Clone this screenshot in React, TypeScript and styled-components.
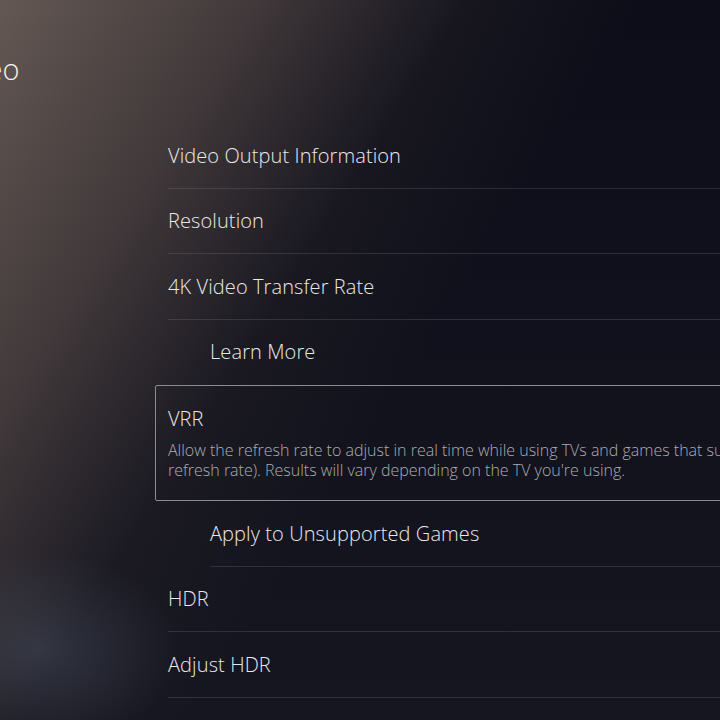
import React from 'react';
import styled, { createGlobalStyle } from 'styled-components';

const GlobalStyle = createGlobalStyle`
  html, body {
    margin: 0;
    padding: 0;
    background: #0d0e18;
  }
`;

const Screen = styled.div`
  width: 720px;
  height: 720px;
  overflow: hidden;
  font-family: 'Open Sans', 'Noto Sans', sans-serif;
  color: #e9e9ea;
  background:
    radial-gradient(ellipse 200px 140px at 40px 650px, rgba(90, 100, 120, 0.35), transparent 70%),
    linear-gradient(122deg, rgba(104, 92, 86, 0.95) 0%, rgba(74, 64, 64, 0.85) 22%, rgba(40, 36, 42, 0.4) 40%, transparent 55%),
    linear-gradient(180deg, #0c0d18 0%, #151620 100%);
  display: flex;
  flex-direction: column;
`;

const PageTitle = styled.h1`
  margin: 49px 0 0 -54px;
  font-size: 29px;
  font-weight: 300;
  line-height: 40px;
  color: #f2f2f2;
`;

const SettingsList = styled.div`
  margin: 34px 0 0 155px;
  width: 780px;
  display: flex;
  flex-direction: column;
`;

const Row = styled.div<{ $indent?: boolean; $noLine?: boolean }>`
  height: 65.5px;
  box-sizing: border-box;
  margin-left: ${(p) => (p.$indent ? 55 : 13)}px;
  display: flex;
  align-items: center;
  border-bottom: 1px solid ${(p) => (p.$noLine ? 'transparent' : 'rgba(120, 122, 135, 0.28)')};
  font-size: 20px;
  font-weight: 300;
  letter-spacing: 0.1px;
`;

const FocusedItem = styled.div`
  height: 116px;
  box-sizing: border-box;
  border: 1.5px solid #8c8c90;
  border-radius: 2px;
  padding: 21px 0 0 12px;
  display: flex;
  flex-direction: column;
`;

const FocusedTitle = styled.div`
  font-size: 20px;
  font-weight: 300;
  line-height: 24px;
`;

const Description = styled.div`
  margin-top: 9px;
  font-size: 16px;
  font-weight: 300;
  line-height: 20px;
  color: #acacb1;
  white-space: nowrap;
`;

const App: React.FC = () => (
  <Screen>
    <GlobalStyle />
    <PageTitle>Video</PageTitle>
    <SettingsList>
      <Row>Video Output Information</Row>
      <Row>Resolution</Row>
      <Row>4K Video Transfer Rate</Row>
      <Row $indent $noLine>
        Learn More
      </Row>
      <FocusedItem>
        <FocusedTitle>VRR</FocusedTitle>
        <Description>
          Allow the refresh rate to adjust in real time while using TVs and games that support VRR (variable
          <br />
          refresh rate). Results will vary depending on the TV you&apos;re using.
        </Description>
      </FocusedItem>
      <Row $indent>Apply to Unsupported Games</Row>
      <Row>HDR</Row>
      <Row>Adjust HDR</Row>
    </SettingsList>
  </Screen>
);

export default App;
